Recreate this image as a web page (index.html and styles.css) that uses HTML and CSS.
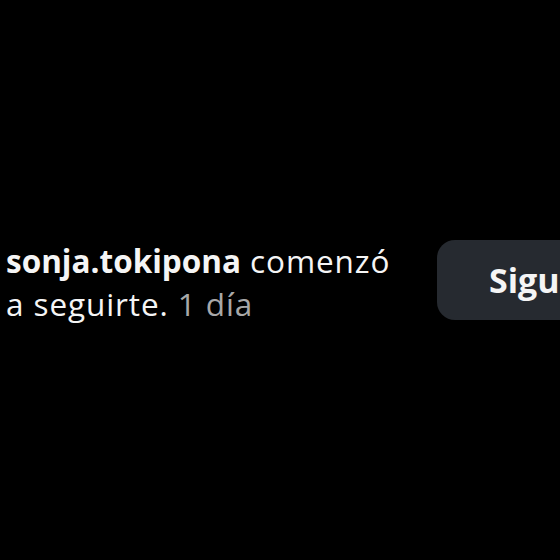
FILE: index.html
```html
<!DOCTYPE html>
<html lang="es">
<head>
<meta charset="utf-8">
<link rel="stylesheet" href="styles.css">
</head>
<body>
<div class="row">
  <p class="text"><span class="user">sonja.tokipona</span> comenzó a seguirte. <span class="time">1 día</span></p>
  <button class="follow">Siguiendo</button>
</div>
</body>
</html>
```
FILE: styles.css
```css
html, body {
  margin: 0;
  padding: 0;
  background: #000;
  width: 560px;
  height: 560px;
  overflow: hidden;
}
.row {
  display: flex;
  align-items: center;
  height: 560px;
  padding-left: 6px;
  gap: 31px;
  width: 800px;
  box-sizing: border-box;
}
.text {
  margin: 4px 0 0;
  width: 400px;
  flex: none;
  font-family: "Open Sans", "Noto Sans", sans-serif;
  font-size: 31.5px;
  line-height: 43px;
  letter-spacing: 0.9px;
  color: #f5f5f5;
}
.user {
  font-weight: 700;
  letter-spacing: 0;
}
.time {
  color: #a8a8a8;
}
.follow {
  flex: none;
  height: 80px;
  padding: 0 52px;
  border: none;
  border-radius: 18px;
  background: #262a30;
  color: #f5f5f5;
  font-family: "Open Sans", "Noto Sans", sans-serif;
  font-weight: 700;
  font-size: 34px;
}
```
